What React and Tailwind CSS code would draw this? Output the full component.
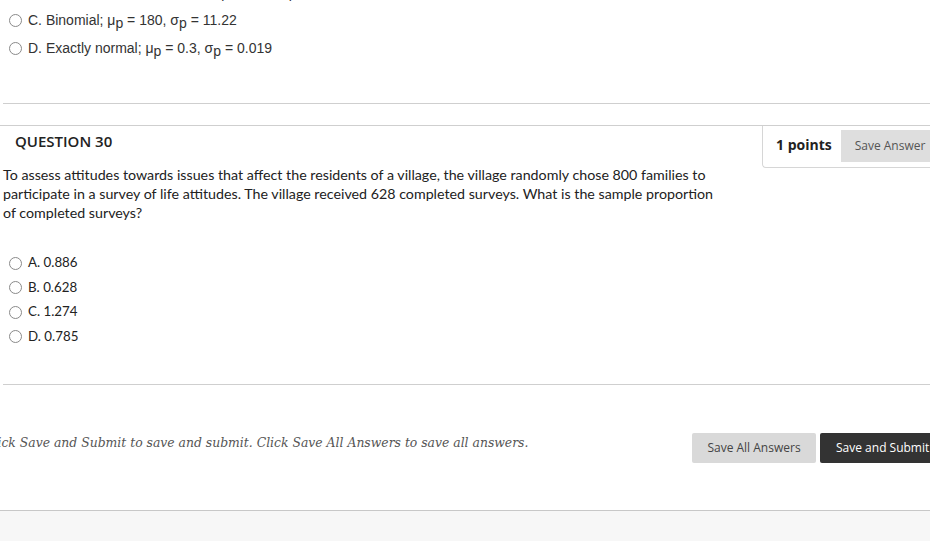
import React from "react";

const Sub = ({ children }) => (
  <sub className="text-[14px] relative top-[3px] align-baseline">{children}</sub>
);

const Radio = () => (
  <span className="inline-block w-[13px] h-[13px] rounded-full border border-[#8a8a8a] bg-white shrink-0" />
);

const PrevRow = ({ label, children, h = "h-[28px]" }) => (
  <div className={`flex items-center ${h} pl-[9px] gap-[6px]`}>
    <Radio />
    <span className="text-[14px] text-[#333]" style={{ fontFamily: "'Liberation Sans', Arial, sans-serif" }}>
      {label} {children}
    </span>
  </div>
);

const options = ["A. 0.886", "B. 0.628", "C. 1.274", "D. 0.785"];

export default function App() {
  return (
    <div className="w-[930px] h-[541px] overflow-hidden bg-white">
      {/* tail of previous question */}
      <div className="-mt-[26px]">
        <PrevRow label="B. Approximately normal bell;" h="h-[32px]">
          μ<Sub>p</Sub> = 0.22, σ<Sub>p</Sub> = 0.015
        </PrevRow>
        <PrevRow label="C. Binomial;">
          μ<Sub>p</Sub> = 180, σ<Sub>p</Sub> = 11.22
        </PrevRow>
        <PrevRow label="D.&nbsp;Exactly normal;">
          μ<Sub>p</Sub> = 0.3, σ<Sub>p</Sub> = 0.019
        </PrevRow>
      </div>

      <div className="h-[41px]" />
      <div className="ml-[3px] border-t border-[#cfcfcf]" />
      <div className="h-[21px]" />

      {/* question 30 */}
      <div className="border-t border-[#cfcfcf]">
        <div className="flex justify-between items-start">
          <div
            className="pl-[15px] pt-[4px] text-[15px] font-semibold text-[#222]"
            style={{ fontFamily: "'Open Sans', sans-serif" }}
          >
            QUESTION 30
          </div>
          <div
            className="flex items-start w-[168px] h-[42px] border-l border-b border-[#d6d6d6] rounded-bl-[4px] pl-[13px] pt-[4px] gap-[9px]"
            style={{ fontFamily: "'Open Sans', sans-serif" }}
          >
            <span className="text-[14px] leading-[30px] font-bold text-[#222]">1 points</span>
            <button className="h-[32px] flex-1 bg-[#dedede] text-[12px] text-[#555] text-left pl-[14px] whitespace-nowrap">
              Save Answer
            </button>
          </div>
        </div>

        <p
          className="pl-[3px] -mt-[3px] w-[725px] text-[14.25px] leading-[19px] text-[#222]"
          style={{ fontFamily: "Lato, 'Open Sans', sans-serif" }}
        >
          To assess attitudes towards issues that affect the residents of a village, the village randomly chose 800 families to
          participate in a survey of life attitudes. The village received 628 completed surveys. What is the sample proportion
          of completed surveys?
        </p>

        <div className="mt-[29px] flex flex-col">
          {options.map((o) => (
            <label key={o} className="flex items-center h-[24.5px] pl-[9px] gap-[6px]">
              <Radio />
              <span className="text-[13.3px] text-[#222]" style={{ fontFamily: "Lato, sans-serif" }}>
                {o}
              </span>
            </label>
          ))}
        </div>
      </div>

      <div className="h-[35px]" />
      <div className="ml-[3px] border-t border-[#cfcfcf]" />

      {/* footer */}
      <div className="flex items-start justify-between h-[125px] pt-[48px]">
        <div className="overflow-hidden w-[560px] pt-[1px]">
          <p
            className="-ml-[16px] italic text-[12.4px] leading-[18px] text-[#555] whitespace-nowrap"
            style={{ fontFamily: "'DejaVu Serif', Georgia, serif" }}
          >
            Click Save and Submit to save and submit. Click Save All Answers to save all answers.
          </p>
        </div>
        <div className="flex gap-[4px] shrink-0 -mr-[8px]" style={{ fontFamily: "'Open Sans', sans-serif" }}>
          <button className="h-[30px] w-[124px] bg-[#d9d9d9] text-[12px] text-[#444] rounded-[2px]">
            Save All Answers
          </button>
          <button className="h-[30px] w-[118px] bg-[#333] text-[12px] text-white rounded-[2px] text-left pl-[16px] whitespace-nowrap">
            Save and Submit
          </button>
        </div>
      </div>

      <div className="border-t border-[#c8c8c8] bg-[#f7f7f7] h-[40px]" />
    </div>
  );
}
